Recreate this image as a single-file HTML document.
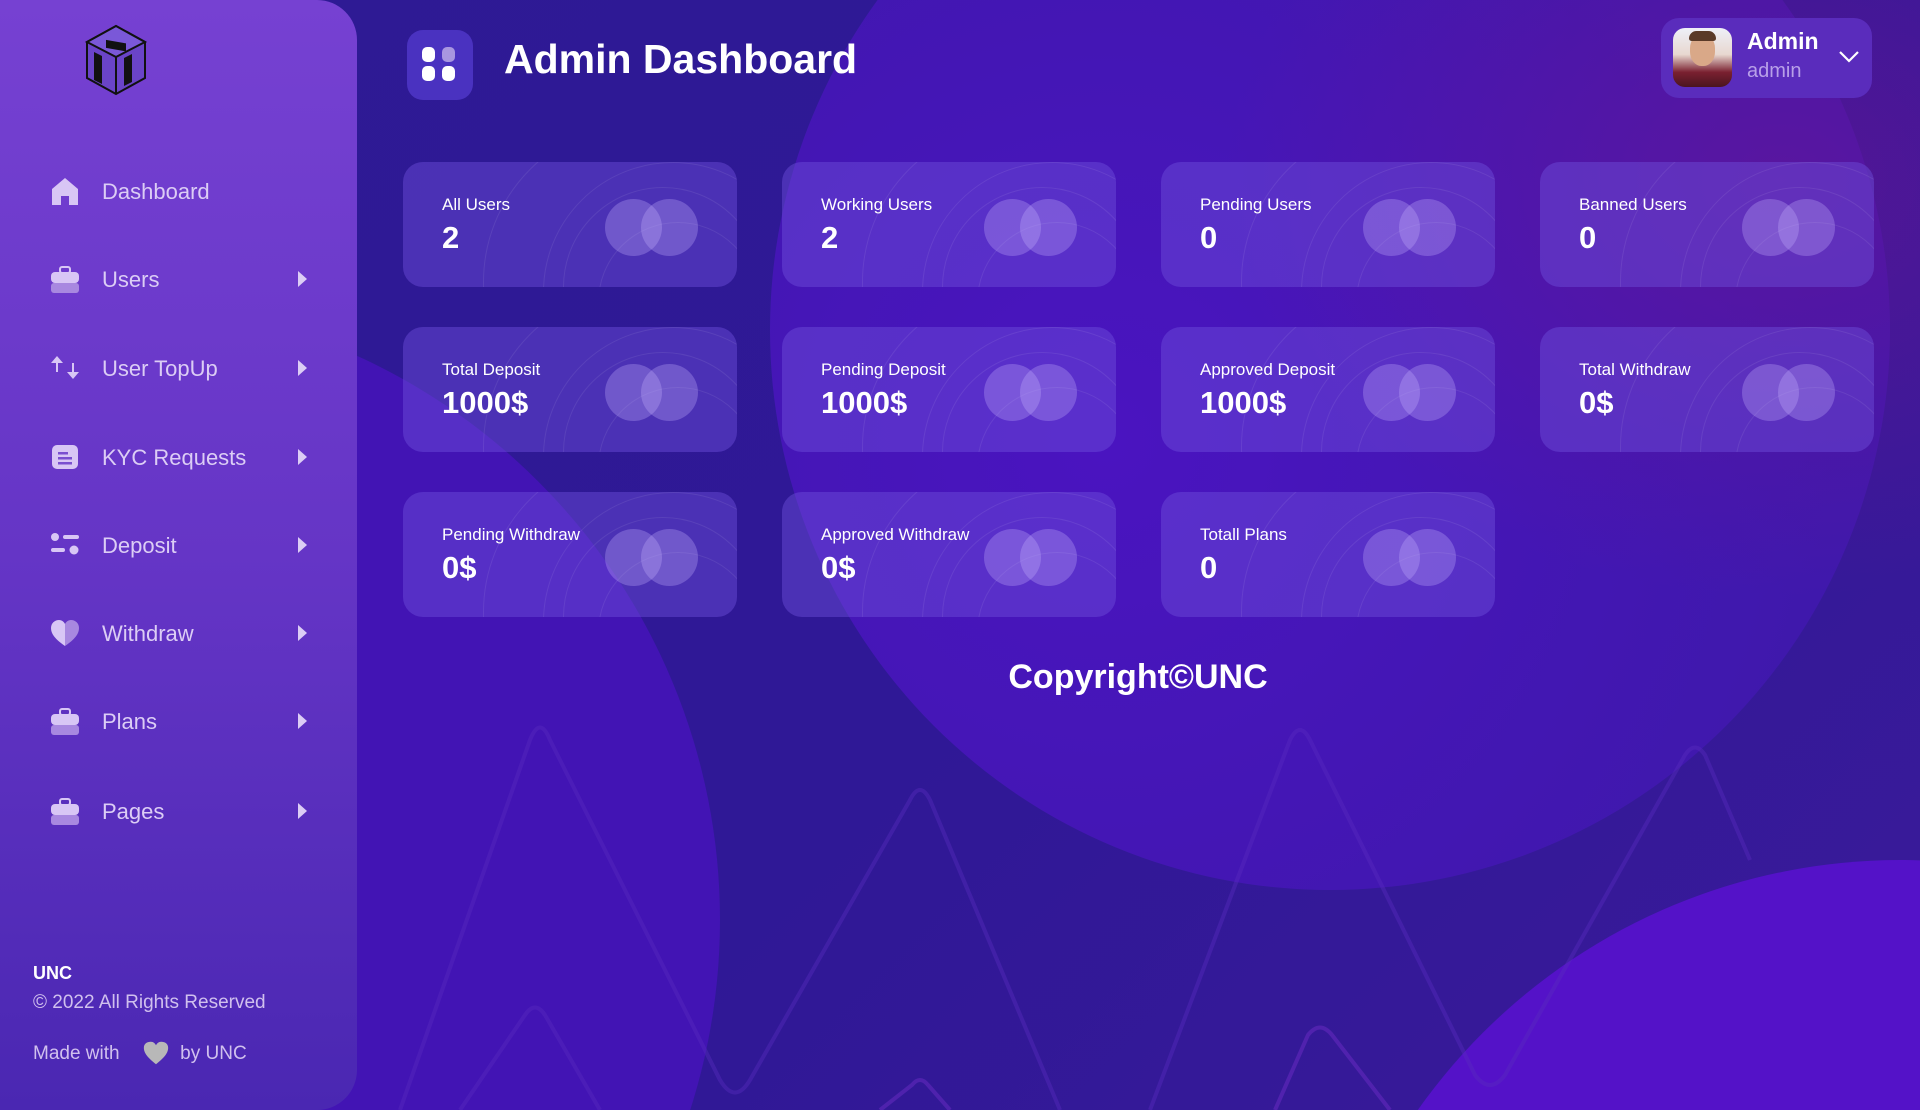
<!DOCTYPE html>
<html style="overflow:hidden;width:1920px;height:1110px"><head><meta charset="utf-8"><style>
*{margin:0;padding:0;box-sizing:border-box}
body{width:1920px;height:1110px;overflow:hidden;position:relative;font-family:"Liberation Sans",sans-serif;background:linear-gradient(135deg,#2e1a94 0%,#2f1896 55%,#3a1a9a 100%)}
.bg{position:absolute;left:0;top:0;width:1920px;height:1110px;overflow:hidden}
.c{position:absolute;border-radius:50%}
.side{position:absolute;left:0;top:0;width:357px;height:1110px;border-radius:0 40px 40px 0;background:linear-gradient(180deg,#7641d2 0%,#6535c6 50%,#4a27b2 100%)}
.nav{position:absolute;left:0;width:357px;height:40px;color:#dccdf5;font-size:22px}
.nav .t{position:absolute;left:102px;top:8px}
.nav .ic{position:absolute;left:49px;top:4px;width:32px;height:32px}
.nav .ar{position:absolute;left:298px;top:12px;width:0;height:0;border-left:9px solid #dccdf5;border-top:8px solid transparent;border-bottom:8px solid transparent}
.card{position:absolute;width:334px;height:125px;border-radius:20px;background:rgba(110,80,220,0.45);overflow:hidden;color:#fff}
.card .l{position:absolute;left:39px;top:33px;font-size:17px}
.card .v{position:absolute;left:39px;top:58px;font-size:31px;font-weight:bold}
.card .a{position:absolute;border-radius:50%;border:1px solid rgba(255,255,255,0.08)}
.card .d{position:absolute;width:57px;height:57px;border-radius:50%;background:rgba(200,180,255,0.3);top:37px}
</style></head><body>
<div class="bg">
<div class="c" style="left:770px;top:-230px;width:1120px;height:1120px;background:radial-gradient(circle at 30% 60%,#4a14c0,#3f18ac 70%)"></div>
<div class="c" style="left:-520px;top:300px;width:1240px;height:1240px;background:#4214b4"></div>
<div class="c" style="left:1310px;top:860px;width:1180px;height:1180px;background:#5412c8"></div>
<div style="position:absolute;right:0;top:0;width:700px;height:600px;background:radial-gradient(ellipse at 80% 30%,rgba(110,20,150,0.55),rgba(110,20,150,0) 70%)"></div>
<svg width="1920" height="1110" style="position:absolute;left:0;top:0" fill="none" stroke="#5a2cc0" stroke-width="4" opacity="0.4">
<path d="M400 1110 L530 740 Q540 715 550 740 L720 1080 Q735 1105 750 1080 L910 800 Q920 780 930 800 L1060 1110"/>
<path d="M460 1110 L525 1015 Q535 1000 545 1015 L600 1110"/>
<path d="M1150 1110 L1290 740 Q1300 720 1310 740 L1475 1075 Q1490 1095 1505 1075 L1685 755 Q1695 740 1705 755 L1750 860"/>
<path d="M880 1110 L912 1085 Q920 1075 928 1085 L950 1110" stroke="#7a30d0"/>
<path d="M1275 1110 L1308 1035 Q1320 1020 1332 1035 L1390 1110" stroke="#7a30d0"/>
</svg>
</div>

<div class="side">
<svg style="position:absolute;left:84px;top:24px" width="64" height="72" viewBox="0 0 64 72"><polygon points="32,2 61,18 61,54 32,70 3,54 3,18" fill="#6a44c8" stroke="#111" stroke-width="2"/><polygon points="32,2 61,18 32,33 3,18" fill="#7a58d8" stroke="#111" stroke-width="2"/><rect x="22" y="12" width="20" height="8" fill="#111" transform="skewY(10)"/><polygon points="10,28 18,32 18,60 10,56" fill="#111"/><polygon points="40,34 48,30 48,58 40,62" fill="#111"/><line x1="32" y1="33" x2="32" y2="70" stroke="#111" stroke-width="2"/></svg>
<div class="nav" style="top:171px"><svg class="ic" viewBox="0 0 32 32"><path d="M16 3 L29 14 V30 H20 V21 H12 V30 H3 V14Z" fill="#d8c6f5"/></svg><span class="t">Dashboard</span></div>
<div class="nav" style="top:259px"><svg class="ic" viewBox="0 0 32 32"><rect x="11" y="4" width="10" height="6" rx="2" fill="none" stroke="#d8c6f5" stroke-width="2"/><rect x="2" y="9" width="28" height="11" rx="4" fill="#d8c6f5"/><rect x="2" y="20" width="28" height="10" rx="3" fill="#a888e0"/></svg><span class="t">Users</span><span class="ar"></span></div>
<div class="nav" style="top:348px"><svg class="ic" viewBox="0 0 32 32"><path d="M2 11 L8 4 L14 11Z M7 11 h2 v9 h-2Z M18 20 L24 27 L30 20Z M23 20 h2 v-9 h-2Z" fill="#d8c6f5"/></svg><span class="t">User TopUp</span><span class="ar"></span></div>
<div class="nav" style="top:437px"><svg class="ic" viewBox="0 0 32 32"><rect x="3" y="4" width="26" height="24" rx="5" fill="#d8c6f5"/><rect x="9" y="11" width="10" height="2.5" fill="#7a4fd0"/><rect x="9" y="16" width="14" height="2.5" fill="#7a4fd0"/><rect x="9" y="21" width="14" height="2.5" fill="#7a4fd0"/></svg><span class="t">KYC Requests</span><span class="ar"></span></div>
<div class="nav" style="top:525px"><svg class="ic" viewBox="0 0 32 32"><circle cx="6" cy="8" r="4" fill="#d8c6f5"/><rect x="14" y="6" width="16" height="4" rx="2" fill="#d8c6f5"/><rect x="2" y="19" width="14" height="4" rx="2" fill="#d8c6f5"/><circle cx="25" cy="21" r="4.5" fill="#d8c6f5"/></svg><span class="t">Deposit</span><span class="ar"></span></div>
<div class="nav" style="top:613px"><svg class="ic" viewBox="0 0 32 32"><path d="M16 29 C6 22 2 17 2 11 C2 6 6 3 10 3 C13 3 15 5 16 7Z" fill="#d8c6f5"/><path d="M16 29 C26 22 30 17 30 11 C30 6 26 3 22 3 C19 3 17 5 16 7Z" fill="#a888e0"/></svg><span class="t">Withdraw</span><span class="ar"></span></div>
<div class="nav" style="top:701px"><svg class="ic" viewBox="0 0 32 32"><rect x="11" y="4" width="10" height="6" rx="2" fill="none" stroke="#d8c6f5" stroke-width="2"/><rect x="2" y="9" width="28" height="11" rx="4" fill="#d8c6f5"/><rect x="2" y="20" width="28" height="10" rx="3" fill="#a888e0"/></svg><span class="t">Plans</span><span class="ar"></span></div>
<div class="nav" style="top:791px"><svg class="ic" viewBox="0 0 32 32"><rect x="11" y="4" width="10" height="6" rx="2" fill="none" stroke="#d8c6f5" stroke-width="2"/><rect x="2" y="9" width="28" height="11" rx="4" fill="#d8c6f5"/><rect x="2" y="20" width="28" height="10" rx="3" fill="#a888e0"/></svg><span class="t">Pages</span><span class="ar"></span></div>
<div style="position:absolute;left:33px;top:963px;color:#fff;font-weight:bold;font-size:18px">UNC</div>
<div style="position:absolute;left:33px;top:992px;color:#d0c0ee;font-size:19px">© 2022 All Rights Reserved</div>
<div style="position:absolute;left:33px;top:1043px;color:#d0c0ee;font-size:19px">Made with <span style="display:inline-block;width:50px"></span> by UNC</div>
<svg style="position:absolute;left:142px;top:1040px" width="28" height="26" viewBox="0 0 32 30"><path d="M16 28 C6 20 2 15 2 9 C2 4 6 2 10 2 C13 2 15 4 16 6 C17 4 19 2 22 2 C26 2 30 4 30 9 C30 15 26 20 16 28Z" fill="#b8b8b8"/></svg>
</div>

<div style="position:absolute;left:407px;top:30px;width:66px;height:70px;border-radius:16px;background:#4a32c0"></div>
<svg style="position:absolute;left:420px;top:45px" width="40" height="40" viewBox="0 0 40 40"><rect x="2" y="2" width="13" height="15" rx="5" fill="#fff"/><rect x="22" y="2" width="13" height="15" rx="5" fill="#a896e0"/><rect x="2" y="21" width="13" height="15" rx="5" fill="#fff"/><rect x="22" y="21" width="13" height="15" rx="5" fill="#fff"/></svg>
<div style="position:absolute;left:504px;top:36px;color:#fff;font-size:41px;font-weight:bold">Admin Dashboard</div>

<div style="position:absolute;left:1661px;top:18px;width:211px;height:80px;border-radius:18px;background:#5a2cbc"></div>
<div style="position:absolute;left:1673px;top:28px;width:59px;height:59px;border-radius:12px;background:linear-gradient(180deg,#eef0f8 0%,#e8d8d0 45%,#7a2030 75%,#4a1520 100%);overflow:hidden"><div style="position:absolute;left:17px;top:6px;width:25px;height:32px;border-radius:45%;background:#d9a888"></div><div style="position:absolute;left:16px;top:3px;width:27px;height:10px;border-radius:12px 12px 4px 4px;background:#5a3a28"></div></div>
<div style="position:absolute;left:1747px;top:28px;color:#fff;font-size:23px;font-weight:bold">Admin</div>
<div style="position:absolute;left:1747px;top:60px;color:#b8a0e8;font-size:20px">admin</div>
<svg style="position:absolute;left:1838px;top:50px" width="22" height="14" viewBox="0 0 22 14"><path d="M2 2 L11 11 L20 2" stroke="#fff" stroke-width="2.2" fill="none"/></svg>

<div class="card" style="left:403px;top:162px"><div class="a" style="left:80px;top:-40px;width:320px;height:320px"></div><div class="a" style="left:140px;top:0;width:260px;height:260px"></div><div class="a" style="left:160px;top:25px;width:200px;height:200px"></div><div class="a" style="left:195px;top:60px;width:160px;height:160px"></div><div class="d" style="left:202px"></div><div class="d" style="left:238px"></div><div class="l">All Users</div><div class="v">2</div></div>
<div class="card" style="left:782px;top:162px"><div class="a" style="left:80px;top:-40px;width:320px;height:320px"></div><div class="a" style="left:140px;top:0;width:260px;height:260px"></div><div class="a" style="left:160px;top:25px;width:200px;height:200px"></div><div class="a" style="left:195px;top:60px;width:160px;height:160px"></div><div class="d" style="left:202px"></div><div class="d" style="left:238px"></div><div class="l">Working Users</div><div class="v">2</div></div>
<div class="card" style="left:1161px;top:162px"><div class="a" style="left:80px;top:-40px;width:320px;height:320px"></div><div class="a" style="left:140px;top:0;width:260px;height:260px"></div><div class="a" style="left:160px;top:25px;width:200px;height:200px"></div><div class="a" style="left:195px;top:60px;width:160px;height:160px"></div><div class="d" style="left:202px"></div><div class="d" style="left:238px"></div><div class="l">Pending Users</div><div class="v">0</div></div>
<div class="card" style="left:1540px;top:162px"><div class="a" style="left:80px;top:-40px;width:320px;height:320px"></div><div class="a" style="left:140px;top:0;width:260px;height:260px"></div><div class="a" style="left:160px;top:25px;width:200px;height:200px"></div><div class="a" style="left:195px;top:60px;width:160px;height:160px"></div><div class="d" style="left:202px"></div><div class="d" style="left:238px"></div><div class="l">Banned Users</div><div class="v">0</div></div>

<div class="card" style="left:403px;top:327px"><div class="a" style="left:80px;top:-40px;width:320px;height:320px"></div><div class="a" style="left:140px;top:0;width:260px;height:260px"></div><div class="a" style="left:160px;top:25px;width:200px;height:200px"></div><div class="a" style="left:195px;top:60px;width:160px;height:160px"></div><div class="d" style="left:202px"></div><div class="d" style="left:238px"></div><div class="l">Total Deposit</div><div class="v">1000$</div></div>
<div class="card" style="left:782px;top:327px"><div class="a" style="left:80px;top:-40px;width:320px;height:320px"></div><div class="a" style="left:140px;top:0;width:260px;height:260px"></div><div class="a" style="left:160px;top:25px;width:200px;height:200px"></div><div class="a" style="left:195px;top:60px;width:160px;height:160px"></div><div class="d" style="left:202px"></div><div class="d" style="left:238px"></div><div class="l">Pending Deposit</div><div class="v">1000$</div></div>
<div class="card" style="left:1161px;top:327px"><div class="a" style="left:80px;top:-40px;width:320px;height:320px"></div><div class="a" style="left:140px;top:0;width:260px;height:260px"></div><div class="a" style="left:160px;top:25px;width:200px;height:200px"></div><div class="a" style="left:195px;top:60px;width:160px;height:160px"></div><div class="d" style="left:202px"></div><div class="d" style="left:238px"></div><div class="l">Approved Deposit</div><div class="v">1000$</div></div>
<div class="card" style="left:1540px;top:327px"><div class="a" style="left:80px;top:-40px;width:320px;height:320px"></div><div class="a" style="left:140px;top:0;width:260px;height:260px"></div><div class="a" style="left:160px;top:25px;width:200px;height:200px"></div><div class="a" style="left:195px;top:60px;width:160px;height:160px"></div><div class="d" style="left:202px"></div><div class="d" style="left:238px"></div><div class="l">Total Withdraw</div><div class="v">0$</div></div>

<div class="card" style="left:403px;top:492px"><div class="a" style="left:80px;top:-40px;width:320px;height:320px"></div><div class="a" style="left:140px;top:0;width:260px;height:260px"></div><div class="a" style="left:160px;top:25px;width:200px;height:200px"></div><div class="a" style="left:195px;top:60px;width:160px;height:160px"></div><div class="d" style="left:202px"></div><div class="d" style="left:238px"></div><div class="l">Pending Withdraw</div><div class="v">0$</div></div>
<div class="card" style="left:782px;top:492px"><div class="a" style="left:80px;top:-40px;width:320px;height:320px"></div><div class="a" style="left:140px;top:0;width:260px;height:260px"></div><div class="a" style="left:160px;top:25px;width:200px;height:200px"></div><div class="a" style="left:195px;top:60px;width:160px;height:160px"></div><div class="d" style="left:202px"></div><div class="d" style="left:238px"></div><div class="l">Approved Withdraw</div><div class="v">0$</div></div>
<div class="card" style="left:1161px;top:492px"><div class="a" style="left:80px;top:-40px;width:320px;height:320px"></div><div class="a" style="left:140px;top:0;width:260px;height:260px"></div><div class="a" style="left:160px;top:25px;width:200px;height:200px"></div><div class="a" style="left:195px;top:60px;width:160px;height:160px"></div><div class="d" style="left:202px"></div><div class="d" style="left:238px"></div><div class="l">Totall Plans</div><div class="v">0</div></div>

<div style="position:absolute;left:900px;width:476px;top:658px;text-align:center;color:#fff;font-size:34px;font-weight:bold">Copyright©UNC</div>
</body></html>
